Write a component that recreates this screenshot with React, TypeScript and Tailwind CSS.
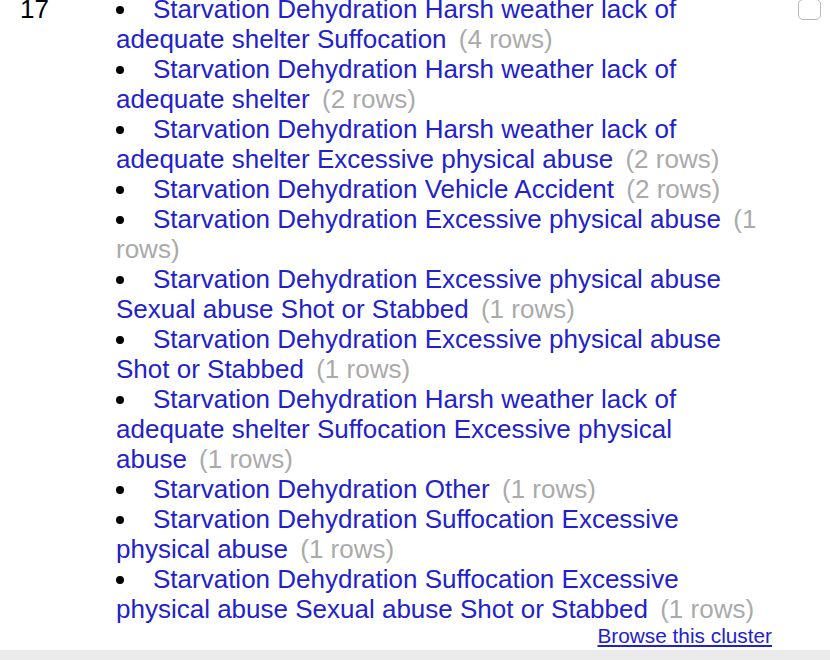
import React from "react";

const items: [string, number][] = [
  ["Starvation Dehydration Harsh weather lack of adequate shelter Suffocation", 4],
  ["Starvation Dehydration Harsh weather lack of adequate shelter", 2],
  ["Starvation Dehydration Harsh weather lack of adequate shelter Excessive physical abuse", 2],
  ["Starvation Dehydration Vehicle Accident", 2],
  ["Starvation Dehydration Excessive physical abuse", 1],
  ["Starvation Dehydration Excessive physical abuse Sexual abuse Shot or Stabbed", 1],
  ["Starvation Dehydration Excessive physical abuse Shot or Stabbed", 1],
  ["Starvation Dehydration Harsh weather lack of adequate shelter Suffocation Excessive physical abuse", 1],
  ["Starvation Dehydration Other", 1],
  ["Starvation Dehydration Suffocation Excessive physical abuse", 1],
  ["Starvation Dehydration Suffocation Excessive physical abuse Sexual abuse Shot or Stabbed", 1],
];

export default function App() {
  return (
    <div className="w-[830px] h-[660px] overflow-hidden bg-white font-['Liberation_Sans',Arial,sans-serif]">
      <div className="flex -mt-[6px]">
        <div className="w-[116px] pl-[20px] text-[26px] leading-[30px] text-black">17</div>
        <div className="w-[656px]">
          <ul className="text-[26px] leading-[30px]">
            {items.map(([label, count], i) => (
              <li key={i}>
                <span className="inline-block w-[37px] align-top h-[30px] relative">
                  <span className="absolute left-0 top-[12px] w-[8px] h-[8px] rounded-full bg-black" />
                </span>
                <a href="#" className="text-[#2222cc]">
                  {label}
                </a>
                {"\u00a0"}
                <span className="ml-[5px] text-[#aaaaaa]">({count} rows)</span>
              </li>
            ))}
          </ul>
          <div className="text-right text-[20.8px] leading-[24px]">
            <a href="#" className="text-[#2222cc] underline">
              Browse this cluster
            </a>
          </div>
        </div>
        <div className="flex-1">
          <div className="ml-[26px] mt-[5px] w-[23px] h-[21px] rounded-[5px] border border-[#b8b8b8] bg-white" />
        </div>
      </div>
      <div className="mt-[2px] h-[20px] bg-[#ebebeb]" />
    </div>
  );
}
